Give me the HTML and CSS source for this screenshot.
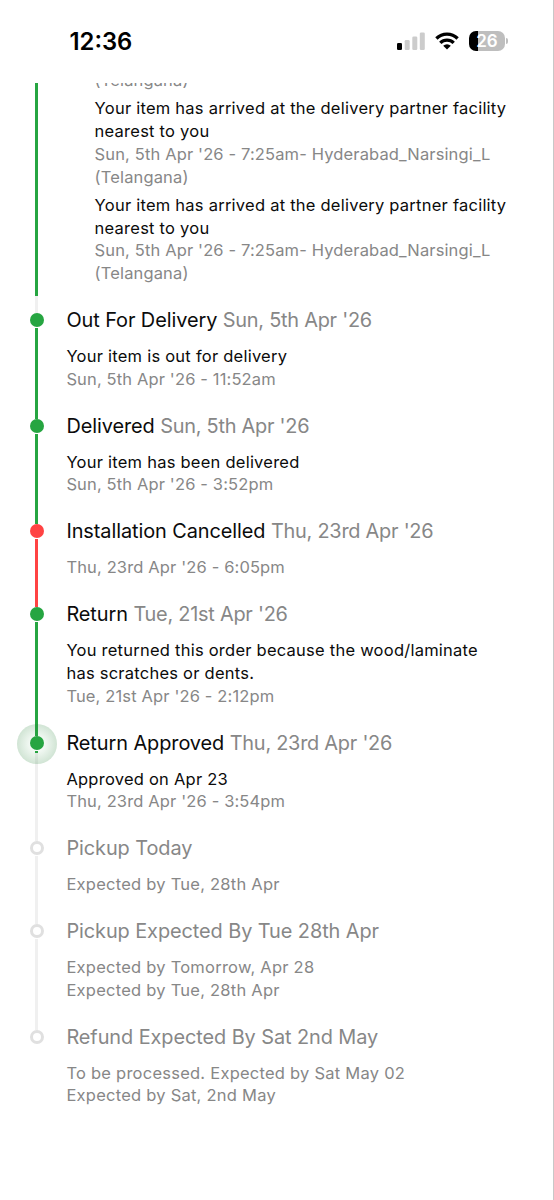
FILE: index.html
```
<!DOCTYPE html>
<html lang="en">
<head>
<meta charset="utf-8">
<title>Order tracking</title>
<link rel="stylesheet" href="styles.css">
</head>
<body>
<main class="screen">
  <header class="status-bar">
    <time class="clock">12:36</time>
    <div class="indicators">
      <svg class="signal" width="28" height="18" viewBox="0 0 28 18">
        <rect x="0" y="11" width="5" height="7" rx="1.3" fill="#000"/>
        <rect x="7.7" y="8" width="5" height="10" rx="1.3" fill="#ccc"/>
        <rect x="15.3" y="4.5" width="5" height="13.5" rx="1.3" fill="#ccc"/>
        <rect x="22.8" y="0.5" width="5" height="17.5" rx="1.3" fill="#ccc"/>
      </svg>
      <svg class="wifi" width="24" height="18" viewBox="0 0 24 18">
        <g fill="none" stroke="#000" stroke-width="3.3">
          <path d="M1.4 6.5a15 15 0 0 1 21.2 0"/>
          <path d="M5.3 10.8a9.5 9.5 0 0 1 13.4 0"/>
        </g>
        <path d="M12 17.5L8.2 13.8a5.4 5.4 0 0 1 7.6 0Z" fill="#000"/>
      </svg>
      <div class="battery"><span class="battery-body">26</span><span class="battery-cap"></span></div>
    </div>
  </header>
  <section class="timeline">
    <article class="step scrolled">
      <div class="rail"><i class="line green"></i></div>
      <div class="content nested">
        <div class="event"><p class="muted date">(Telangana)</p></div>
        <div class="event">
          <p>Your item has arrived at the delivery partner facility<br>nearest to you</p>
          <p class="muted date">Sun, 5th Apr '26 - 7:25am- Hyderabad_Narsingi_L<br>(Telangana)</p>
        </div>
        <div class="event">
          <p>Your item has arrived at the delivery partner facility<br>nearest to you</p>
          <p class="muted date">Sun, 5th Apr '26 - 7:25am- Hyderabad_Narsingi_L<br>(Telangana)</p>
        </div>
      </div>
    </article>
    <article class="step">
      <div class="rail"><i class="dot green"></i><i class="line green"></i></div>
      <div class="content">
        <h2>Out For Delivery <span class="muted">Sun, 5th Apr '26</span></h2>
        <p>Your item is out for delivery</p>
        <p class="muted date">Sun, 5th Apr '26 - 11:52am</p>
      </div>
    </article>
    <article class="step">
      <div class="rail"><i class="dot green"></i><i class="line green"></i></div>
      <div class="content">
        <h2>Delivered <span class="muted">Sun, 5th Apr '26</span></h2>
        <p>Your item has been delivered</p>
        <p class="muted date">Sun, 5th Apr '26 - 3:52pm</p>
      </div>
    </article>
    <article class="step">
      <div class="rail"><i class="dot red"></i><i class="line red"></i></div>
      <div class="content">
        <h2>Installation Cancelled <span class="muted">Thu, 23rd Apr '26</span></h2>
        <p class="muted date">Thu, 23rd Apr '26 - 6:05pm</p>
      </div>
    </article>
    <article class="step">
      <div class="rail"><i class="dot green"></i><i class="line green"></i></div>
      <div class="content">
        <h2>Return <span class="muted">Tue, 21st Apr '26</span></h2>
        <p>You returned this order because the wood/laminate<br>has scratches or dents.</p>
        <p class="muted date">Tue, 21st Apr '26 - 2:12pm</p>
      </div>
    </article>
    <article class="step">
      <div class="rail"><i class="dot green current"></i><i class="line started"></i></div>
      <div class="content">
        <h2>Return Approved <span class="muted">Thu, 23rd Apr '26</span></h2>
        <p>Approved on Apr 23</p>
        <p class="muted date">Thu, 23rd Apr '26 - 3:54pm</p>
      </div>
    </article>
    <article class="step muted">
      <div class="rail"><i class="dot pending"></i><i class="line"></i></div>
      <div class="content">
        <h2>Pickup Today</h2>
        <p>Expected by Tue, 28th Apr</p>
      </div>
    </article>
    <article class="step muted">
      <div class="rail"><i class="dot pending"></i><i class="line"></i></div>
      <div class="content">
        <h2>Pickup Expected By Tue 28th Apr</h2>
        <p>Expected by Tomorrow, Apr 28</p>
        <p>Expected by Tue, 28th Apr</p>
      </div>
    </article>
    <article class="step muted">
      <div class="rail"><i class="dot pending"></i></div>
      <div class="content">
        <h2>Refund Expected By Sat 2nd May</h2>
        <p>To be processed. Expected by Sat May 02</p>
        <p>Expected by Sat, 2nd May</p>
      </div>
    </article>
  </section>
</main>
</body>
</html>
```
FILE: styles.css
```
* { box-sizing: border-box; }
body { margin: 0; background: #fff; color: #0b0b0b; font-family: Inter, "Liberation Sans", sans-serif; }
.screen { width: 554px; height: 1200px; overflow: hidden; border-right: 1px solid #c8c8c8; }
.status-bar { height: 83px; padding: 0 45px 0 69.5px; display: flex; justify-content: space-between; }
.clock { font-size: 23.8px; font-weight: 600; line-height: 30px; margin-top: 27px; color: #000; }
.indicators { height: 22px; margin-top: 30px; display: flex; align-items: center; }
.wifi { margin-left: 10px; }
.battery { display: flex; align-items: center; margin-left: 10px; }
.battery-body { width: 36px; height: 20px; border-radius: 7px; background: linear-gradient(90deg, #000 9px, #bebebe 9px); color: #fff; font-size: 17px; font-weight: 600; line-height: 20px; text-align: center; }
.battery-cap { width: 2px; height: 6px; margin-left: 1px; border-radius: 0 3px 3px 0; background: #bebebe; }
.timeline { height: 1117px; overflow: hidden; }
.step { display: grid; grid-template-columns: 14px 1fr; column-gap: 22.8px; padding-left: 29.6px; }
.content { padding-bottom: 21.3px; }
.nested { padding-left: 28.2px; }
.scrolled { margin-top: -14px; }
.event + .event { margin-top: 5.7px; }
h2 { margin: 0 0 10.9px; font-size: 19.9px; font-weight: 400; line-height: 28px; letter-spacing: -.07px; white-space: nowrap; }
h2 .muted { letter-spacing: -.24px; }
p { margin: 0; font-size: 16.5px; line-height: 22.72px; letter-spacing: .24px; white-space: nowrap; }
.muted { color: #878787; }
.date { letter-spacing: .14px; }
.rail { display: flex; flex-direction: column; align-items: center; margin: 7px 0 -7px; }
.dot { position: relative; z-index: 1; flex: none; width: 14px; height: 14px; border-radius: 50%; }
.line { flex: 1; width: 3px; margin-top: 1px; background: #f0f0f0; }
.green { background: #26a541; }
.red { background: #ff4343; }
.scrolled .rail { padding-bottom: 17px; background: linear-gradient(#f0f0f0, #f0f0f0) bottom / 3px 17px no-repeat; }
.pending { background: #fff; border: 3px solid #e0e0e0; }
.started { background: linear-gradient(#26a541 2px, #f0f0f0 2px); }
.current::before { content: ""; position: absolute; z-index: -1; left: -13px; top: -12px; width: 40px; height: 40px; border-radius: 50%; background: radial-gradient(circle, rgba(38,165,65,.04) 20%, rgba(38,130,55,.21) 70%); }
```
